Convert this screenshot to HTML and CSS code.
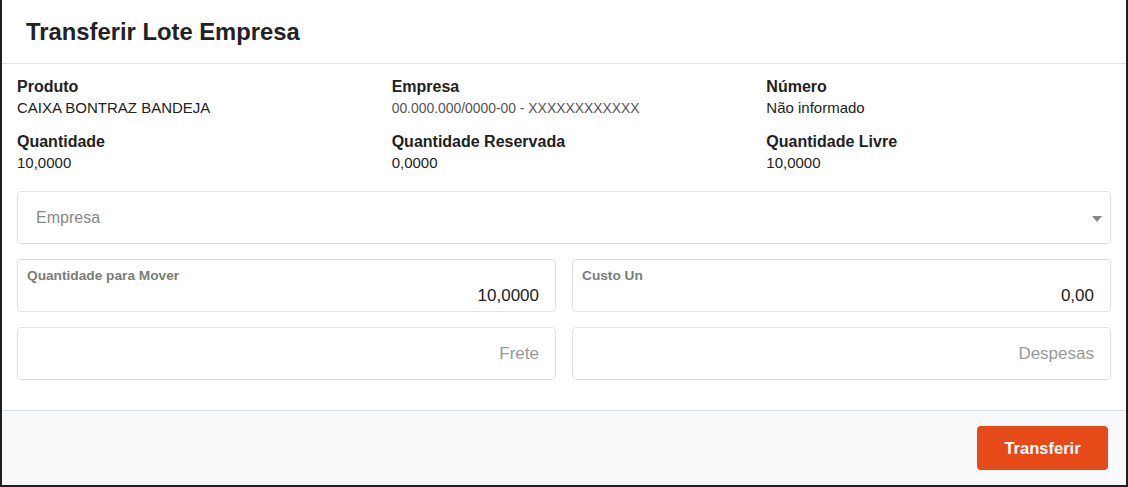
FILE: index.html
```html
<!DOCTYPE html>
<html lang="pt-BR">
<head>
    <meta charset="UTF-8">
    <title>Transferir Lote Empresa</title>
    <link rel="stylesheet" href="styles.css">
</head>
<body>
    <div class="modal">
        <div class="modal-header">
            <h2>Transferir Lote Empresa</h2>
        </div>

        <div class="modal-body">
            <div class="info-grid">
                <div class="info">
                    <div class="info-label">Produto</div>
                    <div class="info-value">CAIXA BONTRAZ BANDEJA</div>
                </div>
                <div class="info">
                    <div class="info-label">Empresa</div>
                    <div class="info-value small">00.000.000/0000-00 - XXXXXXXXXXXX</div>
                </div>
                <div class="info">
                    <div class="info-label">Número</div>
                    <div class="info-value">Não informado</div>
                </div>
                <div class="info">
                    <div class="info-label">Quantidade</div>
                    <div class="info-value">10,0000</div>
                </div>
                <div class="info">
                    <div class="info-label">Quantidade Reservada</div>
                    <div class="info-value">0,0000</div>
                </div>
                <div class="info">
                    <div class="info-label">Quantidade Livre</div>
                    <div class="info-value">10,0000</div>
                </div>
            </div>

            <div class="select-box">
                <span class="placeholder">Empresa</span>
                <span class="caret"></span>
            </div>

            <div class="field-grid">
                <div class="field">
                    <label>Quantidade para Mover</label>
                    <input type="text" value="10,0000">
                </div>
                <div class="field">
                    <label>Custo Un</label>
                    <input type="text" value="0,00">
                </div>
                <div class="field">
                    <input type="text" placeholder="Frete">
                </div>
                <div class="field">
                    <input type="text" placeholder="Despesas">
                </div>
            </div>
        </div>

        <div class="modal-footer">
            <button class="btn-transfer">Transferir</button>
        </div>
    </div>
</body>
</html>
```

FILE: styles.css
```css
body {
    margin: 0;
    padding: 0;
    background-color: #1e1e1e;
    font-family: "Liberation Sans", Arial, sans-serif;
    color: #222;
}

.modal {
    width: 1124px;
    height: 485px;
    margin-left: 2px;
    background-color: white;
    display: flex;
    flex-direction: column;
}

.modal-header {
    height: 63px;
    padding: 0 24px;
    display: flex;
    align-items: center;
    border-bottom: 1px solid #dee2e6;
}

.modal-header h2 {
    margin: 0;
    font-size: 23.8px;
    font-weight: bold;
    color: #222;
}

.modal-body {
    flex: 1;
    padding: 13px 15px 0;
}

.info-grid {
    display: grid;
    grid-template-columns: repeat(3, 1fr);
    column-gap: 30px;
    row-gap: 13px;
}

.info-label {
    font-size: 16px;
    font-weight: bold;
    line-height: 20px;
}

.info-value {
    font-size: 15px;
    line-height: 22px;
}

.info-value.small {
    font-size: 13.9px;
    color: #555;
}

.select-box {
    margin-top: 17px;
    height: 51px;
    border: 1px solid #dee2e6;
    border-radius: 4px;
    display: flex;
    align-items: center;
    justify-content: space-between;
    padding: 0 8px 0 18px;
}

.select-box .placeholder {
    font-size: 16px;
    color: #888;
}

.caret {
    width: 0;
    height: 0;
    border-left: 5px solid transparent;
    border-right: 5px solid transparent;
    border-top: 6px solid #888;
    margin-top: 2px;
}

.field-grid {
    margin-top: 15px;
    display: grid;
    grid-template-columns: 1fr 1fr;
    gap: 15px 16px;
}

.field {
    position: relative;
    height: 51px;
    border: 1px solid #dee2e6;
    border-radius: 4px;
}

.field label {
    position: absolute;
    top: 8px;
    left: 9px;
    font-size: 13.7px;
    font-weight: bold;
    color: #7a7d78;
}

.field input {
    width: 100%;
    height: 100%;
    box-sizing: border-box;
    border: none;
    outline: none;
    background: transparent;
    text-align: right;
    padding: 0 16px;
    font-family: inherit;
    font-size: 17px;
    color: #222;
}

.field label + input {
    padding-top: 20px;
}

.field input::placeholder {
    color: #999;
}

.modal-footer {
    height: 74px;
    border-top: 1px solid #dee2e6;
    background-color: #f8f9fa;
    display: flex;
    align-items: center;
    justify-content: flex-end;
    padding: 0 18px;
}

.btn-transfer {
    width: 131px;
    height: 44px;
    border: none;
    border-radius: 4px;
    background-color: #e64a19;
    color: white;
    font-family: inherit;
    font-size: 16.5px;
    font-weight: bold;
    cursor: pointer;
}
```
